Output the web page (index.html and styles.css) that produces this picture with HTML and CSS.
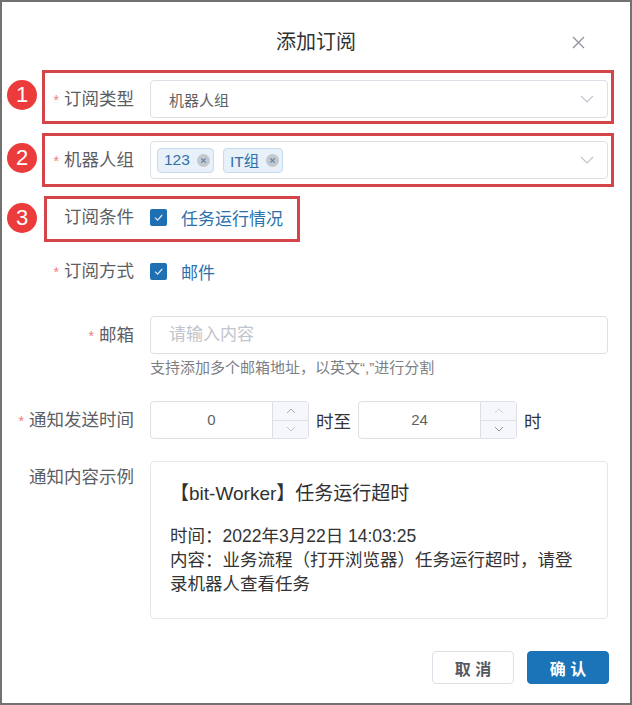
FILE: index.html
```html
<!DOCTYPE html>
<html lang="zh-CN">
<head>
<meta charset="utf-8">
<title>添加订阅</title>
<link rel="stylesheet" href="styles.css">
</head>
<body>
<div class="dialog">
  <header class="dialog-header">
    <h1 class="dialog-title">添加订阅</h1>
    <button class="close-btn" type="button" aria-label="关闭">
      <svg width="13" height="13" viewBox="0 0 13 13"><path d="M1 1L12 12M12 1L1 12" stroke="#8f9399" stroke-width="1.3" fill="none"/></svg>
    </button>
  </header>

  <form class="form">
    <div class="form-item item-type">
      <span class="badge badge-1">1</span>
      <span class="mark mark-1"></span>
      <label class="form-label required">订阅类型</label>
      <div class="form-content">
        <div class="select">
          <span class="select-value">机器人组</span>
          <svg class="chevron" width="14" height="8" viewBox="0 0 14 8"><path d="M1 1L7 7L13 1" stroke="#c0c4cc" stroke-width="1.2" fill="none"/></svg>
        </div>
      </div>
    </div>

    <div class="form-item item-group">
      <span class="badge badge-2">2</span>
      <span class="mark mark-2"></span>
      <label class="form-label required">机器人组</label>
      <div class="form-content">
        <div class="select select-tags">
          <span class="tag">123<svg class="tag-close" width="13" height="13" viewBox="0 0 13 13"><circle cx="6.5" cy="6.5" r="6.5" fill="#c3c7ce"/><path d="M4.3 4.3L8.7 8.7M8.7 4.3L4.3 8.7" stroke="#5d7fa6" stroke-width="1.1"/></svg></span>
          <span class="tag">IT组<svg class="tag-close" width="13" height="13" viewBox="0 0 13 13"><circle cx="6.5" cy="6.5" r="6.5" fill="#c3c7ce"/><path d="M4.3 4.3L8.7 8.7M8.7 4.3L4.3 8.7" stroke="#5d7fa6" stroke-width="1.1"/></svg></span>
          <svg class="chevron" width="14" height="8" viewBox="0 0 14 8"><path d="M1 1L7 7L13 1" stroke="#c0c4cc" stroke-width="1.2" fill="none"/></svg>
        </div>
      </div>
    </div>

    <div class="form-item item-cond">
      <span class="badge badge-3">3</span>
      <span class="mark mark-3"></span>
      <label class="form-label">订阅条件</label>
      <div class="form-content">
        <span class="check">
          <span class="check-box"><svg width="17" height="17" viewBox="0 0 17 17"><path d="M5 8.6L7.6 11.1L12.2 6" stroke="#dce9f5" stroke-width="1.3" fill="none"/></svg></span>
          <span class="check-label">任务运行情况</span>
        </span>
      </div>
    </div>

    <div class="form-item item-way">
      <label class="form-label required">订阅方式</label>
      <div class="form-content">
        <span class="check">
          <span class="check-box"><svg width="17" height="17" viewBox="0 0 17 17"><path d="M5 8.6L7.6 11.1L12.2 6" stroke="#dce9f5" stroke-width="1.3" fill="none"/></svg></span>
          <span class="check-label">邮件</span>
        </span>
      </div>
    </div>

    <div class="form-item item-mail">
      <label class="form-label required">邮箱</label>
      <div class="form-content">
        <input class="input" type="text" placeholder="请输入内容">
        <p class="hint">支持添加多个邮箱地址，以英文“,”进行分割</p>
      </div>
    </div>

    <div class="form-item item-time">
      <label class="form-label required">通知发送时间</label>
      <div class="form-content time-range">
        <div class="number">
          <span class="number-value">0</span>
          <span class="number-ctrl">
            <span class="step step-up"><svg width="10" height="6" viewBox="0 0 10 6"><path d="M1 5L5 1L9 5" stroke="#a8abb2" stroke-width="1" fill="none"/></svg></span>
            <span class="step"><svg width="10" height="6" viewBox="0 0 10 6"><path d="M1 1L5 5L9 1" stroke="#c0c4cc" stroke-width="1" fill="none"/></svg></span>
          </span>
        </div>
        <span class="unit">时至</span>
        <div class="number">
          <span class="number-value">24</span>
          <span class="number-ctrl">
            <span class="step step-up"><svg width="10" height="6" viewBox="0 0 10 6"><path d="M1 5L5 1L9 5" stroke="#d0d3d9" stroke-width="1" fill="none"/></svg></span>
            <span class="step"><svg width="10" height="6" viewBox="0 0 10 6"><path d="M1 1L5 5L9 1" stroke="#8f9399" stroke-width="1" fill="none"/></svg></span>
          </span>
        </div>
        <span class="unit">时</span>
      </div>
    </div>

    <div class="form-item item-example">
      <label class="form-label label-example">通知内容示例</label>
      <div class="form-content">
        <div class="example">
          <div class="example-title">【bit-Worker】任务运行超时</div>
          <div class="example-body">时间：2022年3月22日 14:03:25<br>内容：业务流程（打开浏览器）任务运行超时，请登<br>录机器人查看任务</div>
        </div>
      </div>
    </div>
  </form>

  <footer class="dialog-footer">
    <button class="btn btn-default" type="button">取 消</button>
    <button class="btn btn-primary" type="button">确 认</button>
  </footer>
</div>
</body>
</html>
```

FILE: styles.css
```css
* { box-sizing: border-box; }
html, body { margin: 0; padding: 0; background: #fff; }
body { font-family: "Liberation Sans", "Noto Sans CJK SC", sans-serif; }

.dialog {
  width: 632px;
  height: 705px;
  border: 2px solid #727272;
  background: #fff;
  overflow: hidden;
}

.dialog-header {
  display: grid;
  grid-template-columns: 1fr auto 1fr;
  align-items: center;
  padding-top: 26px;
}
.dialog-title {
  grid-column: 2;
  margin: 0;
  font-size: 20px;
  line-height: 28px;
  font-weight: normal;
  color: #303133;
}
.close-btn {
  grid-column: 3;
  justify-self: end;
  margin-right: 45px;
  padding: 0;
  border: 0;
  background: none;
  width: 13px;
  height: 13px;
  display: flex;
}

.form {
  margin-top: 24px;
  padding-right: 22px;
}
.form-item {
  position: relative;
  display: flex;
  align-items: flex-start;
}
.form-label {
  flex: none;
  width: 132px;
  height: 38px;
  margin-right: 16px;
  text-align: right;
  font-size: 17.5px;
  line-height: 38px;
  color: #5b5e64;
  white-space: nowrap;
}
.required::before {
  content: "*";
  color: #f07c7c;
  font-size: 14px;
  line-height: 1;
  margin-right: 5px;
}
.form-content { flex: 1; min-width: 0; }

.item-group { margin-top: 23px; }
.item-cond { margin-top: 19px; }
.item-way { margin-top: 16px; }
.item-mail { margin-top: 26px; }
.item-time { margin-top: 23px; }
.item-example { margin-top: 22px; }

/* annotations */
.badge {
  position: absolute;
  left: 5px;
  width: 30px;
  height: 30px;
  border-radius: 50%;
  background: #ec3b3b;
  color: #fff;
  font-size: 22px;
  line-height: 30px;
  text-align: center;
  font-family: "Liberation Sans", sans-serif;
}
.badge-1 { top: 0; }
.badge-2 { top: 2px; }
.badge-3 { top: 5px; }
.mark {
  position: absolute;
  border: 3px solid #d4454a;
  pointer-events: none;
}
.mark-1 { left: 40px; right: -6px; top: -10px; bottom: -6px; }
.mark-2 { left: 40px; right: -6px; top: -8px; bottom: -8px; }
.mark-3 { left: 42px; width: 256px; top: -2px; bottom: -6px; }

/* select */
.select {
  display: flex;
  align-items: center;
  height: 38px;
  border: 1px solid #dcdfe6;
  border-radius: 4px;
  padding: 0 13px 0 18px;
  background: #fff;
}
.select-value { font-size: 15px; color: #606266; }
.chevron { margin-left: auto; }
.select-tags { padding-left: 6px; gap: 9px; }
.tag {
  display: inline-flex;
  align-items: center;
  gap: 7px;
  height: 25px;
  padding: 0 3px 0 6px;
  background: #e8f1f9;
  border: 1px solid #c6dbee;
  border-radius: 4px;
  color: #2f70aa;
  font-size: 15.5px;
}

/* checkbox */
.check {
  display: flex;
  align-items: center;
  gap: 14px;
  height: 38px;
}
.check-box {
  width: 17px;
  height: 17px;
  border-radius: 2px;
  background: #1e70b3;
  display: flex;
}
.check-label { font-size: 17px; color: #2a70ac; }

/* input */
.input {
  display: block;
  width: 100%;
  height: 38px;
  border: 1px solid #dcdfe6;
  border-radius: 4px;
  padding: 0 18px;
  font-family: inherit;
  font-size: 17px;
  color: #606266;
  outline: none;
}
.input::placeholder { color: #c0c4cc; }
.hint {
  margin: 4px 0 0;
  font-size: 15px;
  line-height: 20px;
  color: #7d7f84;
}

/* number inputs */
.time-range { display: flex; align-items: center; }
.number {
  display: flex;
  width: 159px;
  height: 38px;
  border: 1px solid #dcdfe6;
  border-radius: 4px;
  overflow: hidden;
}
.number-value {
  flex: 1;
  text-align: center;
  font-size: 15px;
  line-height: 36px;
  color: #606266;
}
.number-ctrl {
  width: 36px;
  display: flex;
  flex-direction: column;
  border-left: 1px solid #dcdfe6;
  background: #f5f7fa;
}
.step {
  flex: 1;
  display: flex;
  align-items: center;
  justify-content: center;
}
.step-up { border-bottom: 1px solid #dcdfe6; }
.unit {
  margin: 0 7px;
  font-size: 17.5px;
  color: #333;
}

/* example */
.label-example { height: 32px; line-height: 32px; }
.example {
  height: 158px;
  border: 1px solid #e4e7ed;
  border-radius: 4px;
  padding: 19px 19px;
  color: #333;
}
.example-title { font-size: 19px; line-height: 26px; color: #303133; }
.example-body { margin-top: 17px; font-size: 17.5px; line-height: 24px; }

/* footer */
.dialog-footer {
  display: flex;
  justify-content: flex-end;
  gap: 13px;
  margin-top: 32px;
  padding-right: 21px;
}
.btn {
  width: 82px;
  height: 33px;
  border-radius: 4px;
  font-family: inherit;
  font-size: 16px;
  font-weight: 600;
  padding: 0;
}
.btn-default { background: #fff; border: 1px solid #dcdfe6; color: #55585e; }
.btn-primary { background: #1b73b8; border: 1px solid #1b73b8; color: #fff; }
```
